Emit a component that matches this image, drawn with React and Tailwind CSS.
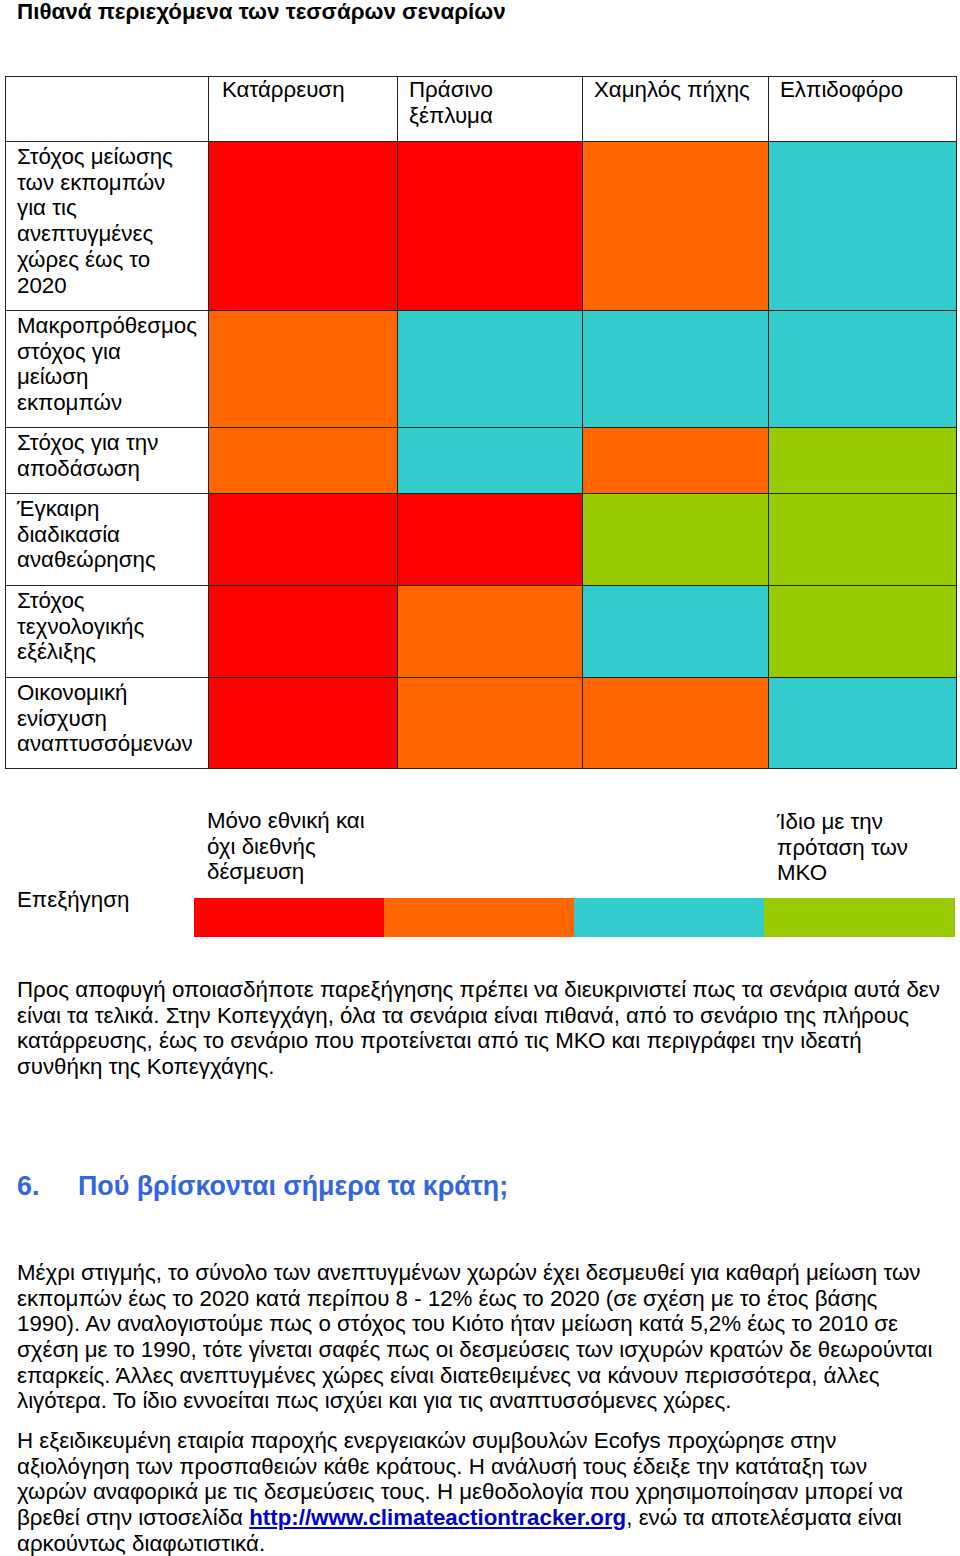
const R = 'bg-[#ff0000]';
const O = 'bg-[#ff6600]';
const C = 'bg-[#33cccc]';
const G = 'bg-[#99cc00]';

const ROWS = [
    { label: ['Στόχος μείωσης', 'των εκπομπών', 'για τις', 'ανεπτυγμένες', 'χώρες έως το', '2020'], h: 'h-[169px]', cells: [R, R, O, C] },
    { label: ['Μακροπρόθεσμος', 'στόχος για', 'μείωση', 'εκπομπών'], h: 'h-[117px]', cells: [O, C, C, C] },
    { label: ['Στόχος για την', 'αποδάσωση'], h: 'h-[66px]', cells: [O, C, O, G] },
    { label: ['Έγκαιρη', 'διαδικασία', 'αναθεώρησης'], h: 'h-[92px]', cells: [R, R, G, G] },
    { label: ['Στόχος', 'τεχνολογικής', 'εξέλιξης'], h: 'h-[92px]', cells: [R, O, C, G] },
    { label: ['Οικονομική', 'ενίσχυση', 'αναπτυσσόμενων'], h: 'h-[91px]', cells: [R, O, O, C] },
];

const HEADS = [
    { lines: ['Κατάρρευση'], pad: 'pl-[13px]' },
    { lines: ['Πράσινο', 'ξέπλυμα'], pad: 'pl-[11px]' },
    { lines: ['Χαμηλός πήχης'], pad: 'pl-[11px]' },
    { lines: ['Ελπιδοφόρο'], pad: 'pl-[11px]' },
];

function Lines({ lines }) {
    return lines.map((l, i) => <div key={i}>{l}</div>);
}

export default function App() {
    return (
        <div className="w-[960px] bg-white text-black text-[22.3px] leading-[25.7px]" style={{ fontFamily: '"Liberation Sans", Arial, sans-serif' }}>
            <h1 className="pl-[17px] pt-0 text-[22.4px] leading-[24px] font-bold">Πιθανά περιεχόμενα των τεσσάρων σεναρίων</h1>

            <table className="ml-[5px] mt-[52px] border-collapse border border-[#222] table-fixed w-[951px]">
                <colgroup>
                    <col className="w-[203px]"/>
                    <col className="w-[189px]"/>
                    <col className="w-[185px]"/>
                    <col className="w-[186px]"/>
                    <col className="w-[188px]"/>
                </colgroup>
                <thead>
                    <tr className="h-[65px]">
                        <th className="border border-[#222]"></th>
                        {HEADS.map((h, i) => (
                            <th key={i} className={`border border-[#222] align-top text-left font-normal pt-0 ${h.pad}`}>
                                <Lines lines={h.lines}/>
                            </th>
                        ))}
                    </tr>
                </thead>
                <tbody>
                    {ROWS.map((r, i) => (
                        <tr key={i} className={r.h}>
                            <td className="border border-[#222] align-top pl-[11px] pt-[2px]">
                                <Lines lines={r.label}/>
                            </td>
                            {r.cells.map((c, j) => (
                                <td key={j} className={`border border-[#222] ${c}`}></td>
                            ))}
                        </tr>
                    ))}
                </tbody>
            </table>

            <div className="flex mt-[39px]">
                <div className="w-[194px] pl-[17px] pt-[79px]">Επεξήγηση</div>
                <div className="flex flex-col">
                    <div className="flex h-[90px]">
                        <div className="w-[570px] pl-[13px]">
                            <Lines lines={['Μόνο εθνική και', 'όχι διεθνής', 'δέσμευση']}/>
                        </div>
                        <div className="pl-[13px] pt-[1px]">
                            <Lines lines={['Ίδιο με την', 'πρόταση των', 'ΜΚΟ']}/>
                        </div>
                    </div>
                    <div className="flex h-[39px]">
                        <div className="w-[190px] bg-[#ff0000]"></div>
                        <div className="w-[190px] bg-[#ff6600]"></div>
                        <div className="w-[190px] bg-[#33cccc]"></div>
                        <div className="w-[191px] bg-[#99cc00]"></div>
                    </div>
                </div>
            </div>

            <p className="pl-[17px] mt-[40px]">
                Προς αποφυγή οποιασδήποτε παρεξήγησης πρέπει να διευκρινιστεί πως τα σενάρια αυτά δεν<br/>
                είναι τα τελικά. Στην Κοπεγχάγη, όλα τα σενάρια είναι πιθανά, από το σενάριο της πλήρους<br/>
                κατάρρευσης, έως το σενάριο που προτείνεται από τις ΜΚΟ και περιγράφει την ιδεατή<br/>
                συνθήκη της Κοπεγχάγης.
            </p>

            <h2 className="flex pl-[17px] mt-[91px] text-[26.8px] leading-[30px] font-bold text-[#3366dd]">
                <span className="w-[61px]">6.</span>
                <span>Πού βρίσκονται σήμερα τα κράτη;</span>
            </h2>

            <p className="pl-[17px] mt-[59px]">
                Μέχρι στιγμής, το σύνολο των ανεπτυγμένων χωρών έχει δεσμευθεί για καθαρή μείωση των<br/>
                εκπομπών έως το 2020 κατά περίπου 8 - 12% έως το 2020 (σε σχέση με το έτος βάσης<br/>
                1990). Αν αναλογιστούμε πως ο στόχος του Κιότο ήταν μείωση κατά 5,2% έως το 2010 σε<br/>
                σχέση με το 1990, τότε γίνεται σαφές πως οι δεσμεύσεις των ισχυρών κρατών δε θεωρούνται<br/>
                επαρκείς. Άλλες ανεπτυγμένες χώρες είναι διατεθειμένες να κάνουν περισσότερα, άλλες<br/>
                λιγότερα. Το ίδιο εννοείται πως ισχύει και για τις αναπτυσσόμενες χώρες.
            </p>

            <p className="pl-[17px] mt-[14px]">
                Η εξειδικευμένη εταιρία παροχής ενεργειακών συμβουλών Ecofys προχώρησε στην<br/>
                αξιολόγηση των προσπαθειών κάθε κράτους. Η ανάλυσή τους έδειξε την κατάταξη των<br/>
                χωρών αναφορικά με τις δεσμεύσεις τους. Η μεθοδολογία που χρησιμοποίησαν μπορεί να<br/>
                βρεθεί στην ιστοσελίδα <a href="#" className="font-bold text-[#0000cc] underline">http://www.climateactiontracker.org</a>, ενώ τα αποτελέσματα είναι<br/>
                αρκούντως διαφωτιστικά.
            </p>
        </div>
    );
}
